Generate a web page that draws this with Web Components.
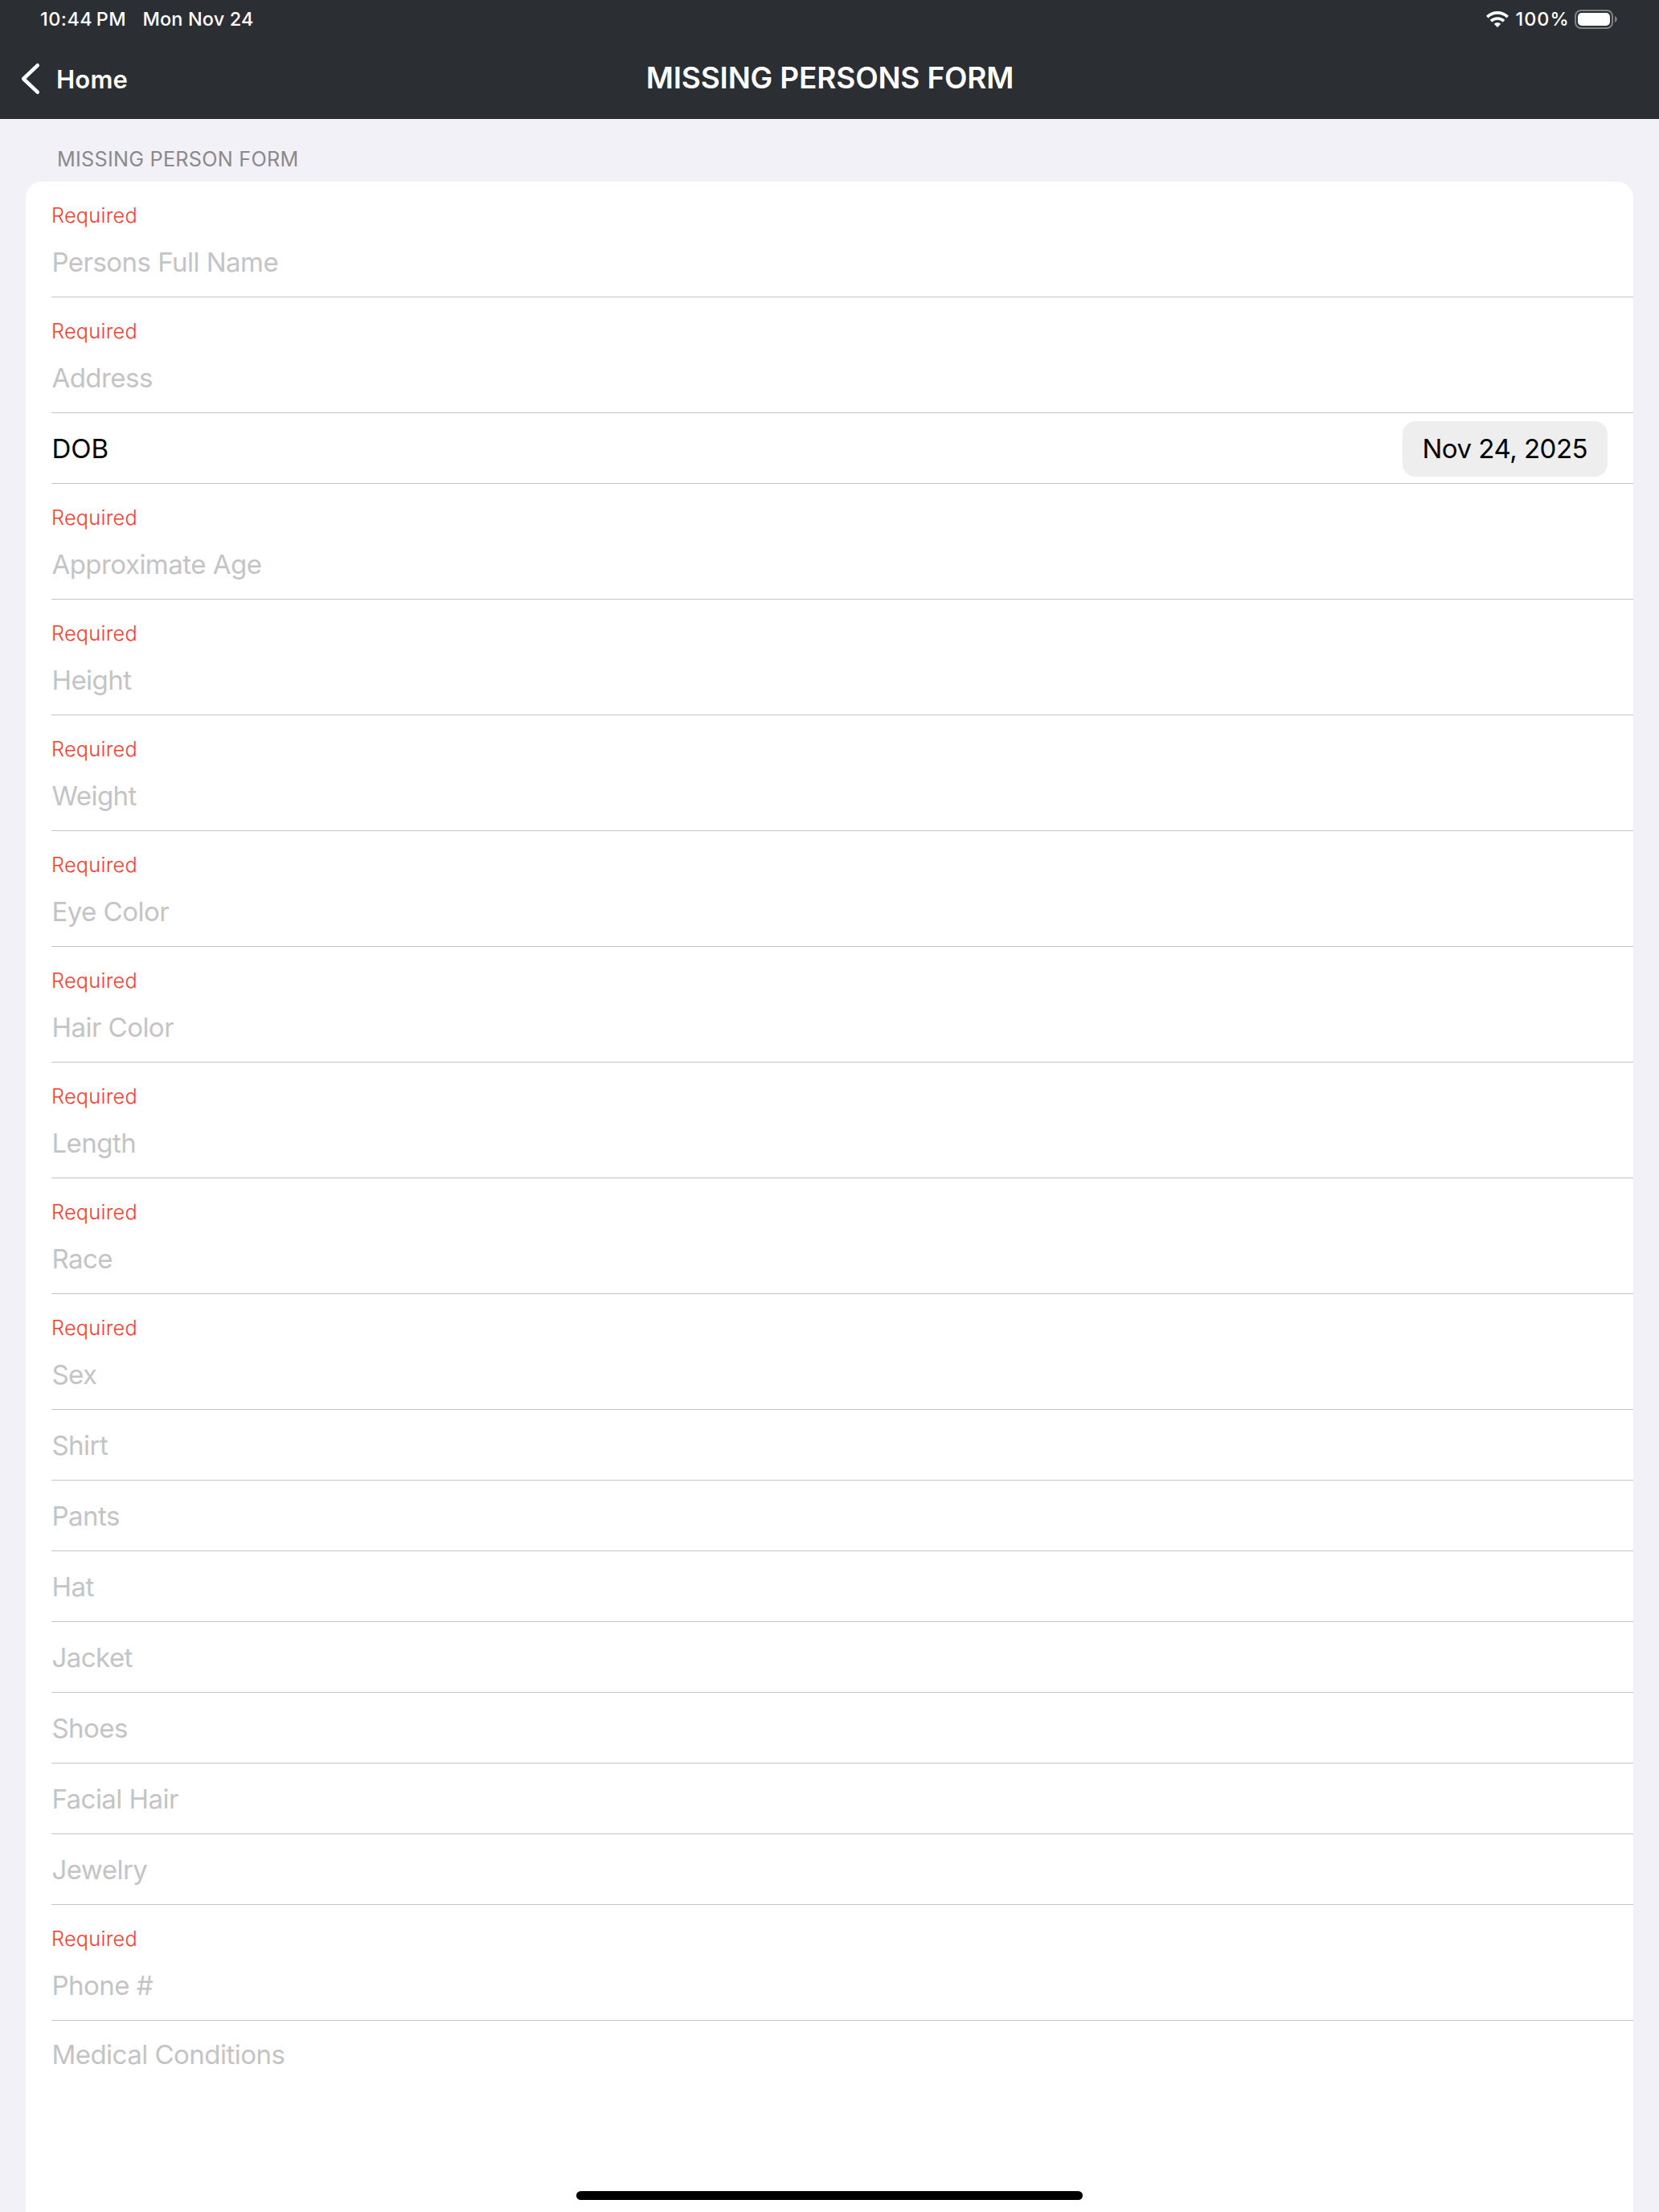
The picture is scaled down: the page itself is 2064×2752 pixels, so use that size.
<!DOCTYPE html>
<html lang="en">
<head>
<meta charset="utf-8">
<title>Missing Persons Form</title>
<style>
  html, body { margin: 0; height: 2752px; overflow: hidden; background: #f2f1f7; }
  body { font-family: Inter, "Liberation Sans", sans-serif; }
</style>
</head>
<body>
<app-screen>
  <status-bar slot="top" time="10:44&#8239;PM" date="Mon Nov 24" battery="100%"></status-bar>
  <nav-bar slot="top" back="Home">MISSING PERSONS FORM</nav-bar>
  <form-section label="MISSING PERSON FORM">
    <form-field required>Persons Full Name</form-field>
    <form-field required>Address</form-field>
    <date-field value="Nov 24, 2025">DOB</date-field>
    <form-field required>Approximate Age</form-field>
    <form-field required>Height</form-field>
    <form-field required>Weight</form-field>
    <form-field required>Eye Color</form-field>
    <form-field required>Hair Color</form-field>
    <form-field required>Length</form-field>
    <form-field required>Race</form-field>
    <form-field required>Sex</form-field>
    <form-field>Shirt</form-field>
    <form-field>Pants</form-field>
    <form-field>Hat</form-field>
    <form-field>Jacket</form-field>
    <form-field>Shoes</form-field>
    <form-field>Facial Hair</form-field>
    <form-field>Jewelry</form-field>
    <form-field required>Phone #</form-field>
    <form-field multiline>Medical Conditions</form-field>
  </form-section>
</app-screen>

<script>
class Base extends HTMLElement {
  connectedCallback() {
    if (!this.shadowRoot) this.attachShadow({ mode: "open" }).innerHTML = this.render();
  }
  attr(name) { return this.getAttribute(name) || ""; }
}

customElements.define("app-screen", class extends Base {
  render() {
    return `
      <style>
        :host { display: flex; flex-direction: column; height: 2752px; position: relative; overflow: hidden; }
        header { flex: none; height: 148px; box-sizing: border-box; background: #2b2e33; color: #fff; border-bottom: 1px solid #232529; }
        main { flex: 1; display: flex; flex-direction: column; padding: 0 32px; }
        .home-indicator { position: absolute; left: 717px; top: 2726px; width: 630px; height: 11px; border-radius: 6px; background: #000; }
      </style>
      <header><slot name="top"></slot></header>
      <main><slot></slot></main>
      <div class="home-indicator"></div>`;
  }
});

customElements.define("status-bar", class extends Base {
  render() {
    return `
      <style>
        :host { display: flex; align-items: center; height: 47px; padding: 0 52px 0 50px; font-size: 23.4px; font-weight: 500; line-height: 30px; white-space: nowrap; }
        .time { width: 127.5px; letter-spacing: .5px; }
        .date { letter-spacing: .18px; }
        .right { margin-left: auto; display: flex; align-items: center; }
        .pct { margin: 0 7.5px 0 8.5px; letter-spacing: 1px; width: 66px; }
        svg { display: block; }
      </style>
      <span class="time">${this.attr("time")}</span>
      <span class="date">${this.attr("date")}</span>
      <div class="right">
        <svg width="28" height="20" viewBox="0 0 28 20" fill="none" stroke="#fff" stroke-width="3.7">
          <path d="M1.3 7.1A18.2 18.2 0 0 1 26.7 7.1"/>
          <path d="M6 12.2A11.6 11.6 0 0 1 22 12.2"/>
          <path d="M14 20L9.8 15.8A6 6 0 0 1 18.2 15.8Z" fill="#fff" stroke="none"/>
        </svg>
        <span class="pct">${this.attr("battery")}</span>
        <svg width="53" height="24" viewBox="0 0 53 24">
          <rect x="1" y="1" width="46" height="22" rx="7" fill="none" stroke="#808286" stroke-width="2"/>
          <rect x="4" y="4" width="40" height="16" rx="4.8" fill="#fff"/>
          <path d="M50 8C53.7 9.6 53.7 14.4 50 16Z" fill="#808286"/>
        </svg>
      </div>`;
  }
});

customElements.define("nav-bar", class extends Base {
  render() {
    return `
      <style>
        :host { display: grid; grid-template-columns: 1fr auto 1fr; align-items: center; height: 100px; font-weight: 600; white-space: nowrap; }
        .back { display: flex; align-items: center; gap: 19px; padding-left: 25px; font-size: 31px; line-height: 40px; letter-spacing: .2px; padding-top: 3px; }
        svg { display: block; margin-top: -1px; }
        h1 { margin: 0; font-size: 37px; font-weight: 600; line-height: 46px; letter-spacing: -.16px; padding: 0 0 0 1px; }
      </style>
      <div class="back">
        <svg width="26" height="40" viewBox="0 0 26 40" fill="none" stroke="#fff" stroke-width="4.6" stroke-linecap="round" stroke-linejoin="round"><path d="M21.7 3.3L4.2 20L21.7 36.7"/></svg>
        <span>${this.attr("back")}</span>
      </div>
      <h1><slot></slot></h1>`;
  }
});

customElements.define("form-section", class extends Base {
  render() {
    return `
      <style>
        :host { display: flex; flex-direction: column; flex: 1; }
        .label { padding: 34px 38px 12px 39px; font-size: 25.2px; line-height: 32px; letter-spacing: .26px; color: #8a898e; }
        .card { flex: 1; background: #fff; border-radius: 20px 20px 0 0; overflow: hidden; }
      </style>
      <div class="label">${this.attr("label")}</div>
      <div class="card"><slot></slot></div>`;
  }
});

const rowStyle = `
  :host { display: block; padding-left: 32px; }
  .row { box-sizing: border-box; height: 88px; display: flex; flex-direction: column; border-bottom: 1px solid #c6c6c8; padding-top: 24px; }
  .text { font-size: 33px; line-height: 40px; letter-spacing: -.52px; white-space: nowrap; }
`;

customElements.define("form-field", class extends Base {
  render() {
    const required = this.hasAttribute("required");
    return `
      <style>
        ${rowStyle}
        .text { color: #c4c4c6; padding-left: .4px; }
        .note { font-size: 25.3px; font-weight: 300; line-height: 32px; letter-spacing: .25px; color: #ff3b30; margin-bottom: 22px; }
        :host([required]) .row { height: 144px; padding-top: 26px; }
        :host([multiline]) .row { height: auto; border: 0; padding-top: 22px; }
      </style>
      <div class="row">
        ${required ? '<div class="note">Required</div>' : ""}
        <div class="text"><slot></slot></div>
      </div>`;
  }
});

customElements.define("date-field", class extends Base {
  render() {
    return `
      <style>
        ${rowStyle}
        .row { flex-direction: row; align-items: center; justify-content: space-between; padding: 1px 32px 0 0; color: #000; }
        .label { letter-spacing: 0; padding-left: .5px; }
        .pill { box-sizing: border-box; width: 255px; height: 69px; line-height: 69px; padding-left: 24.5px; border-radius: 16px; background: #eeeeef; letter-spacing: -.5px; }
      </style>
      <div class="row">
        <span class="text label"><slot></slot></span>
        <span class="text pill">${this.attr("value")}</span>
      </div>`;
  }
});
</script>
</body>
</html>
